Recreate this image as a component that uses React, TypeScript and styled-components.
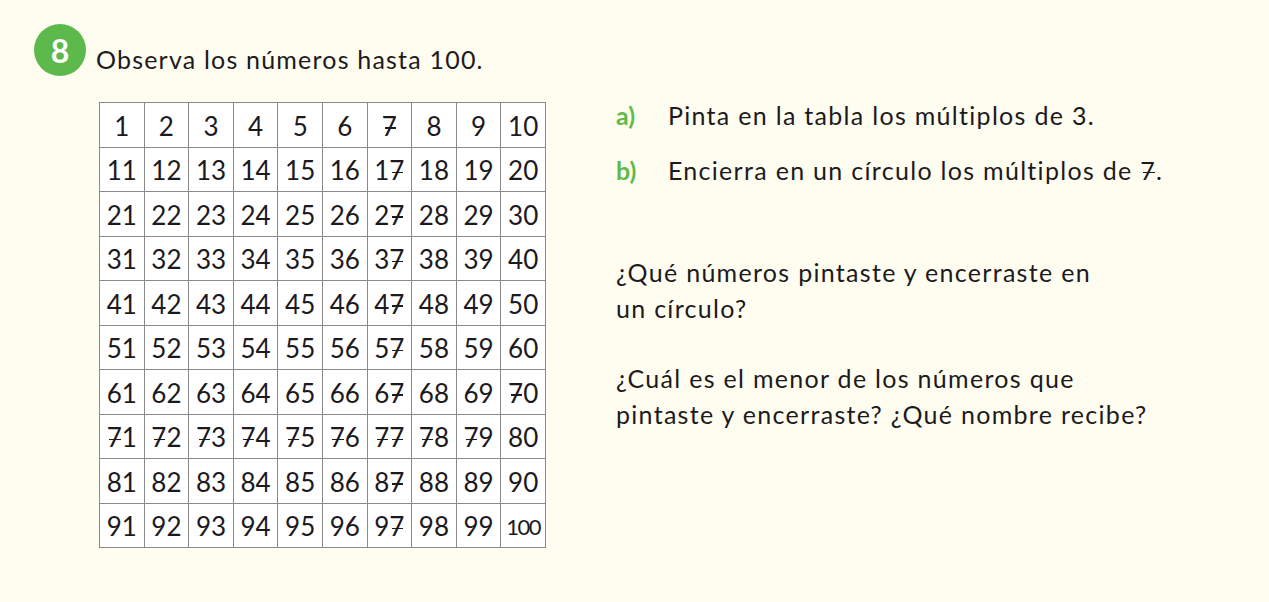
import React from "react";
import styled, { createGlobalStyle } from "styled-components";

const GlobalStyle = createGlobalStyle`
  html, body {
    margin: 0;
    padding: 0;
    background: #fffdf0;
  }
  body {
    font-family: "Lato", "Liberation Sans", sans-serif;
    color: #1c1a1e;
  }
`;

const Page = styled.div`
  width: 1269px;
  height: 602px;
  padding: 24px 0 0 34px;
  box-sizing: border-box;
`;

const Header = styled.div`
  display: flex;
  align-items: center;
  gap: 10px;
`;

const Badge = styled.div`
  width: 52px;
  height: 52px;
  border-radius: 50%;
  background: #5db94b;
  color: #fff;
  font-weight: 700;
  font-size: 32px;
  display: flex;
  align-items: center;
  justify-content: center;
`;

const Title = styled.h2`
  margin: 18px 0 0;
  font-size: 25px;
  font-weight: 400;
  letter-spacing: 1.2px;
`;

const Body = styled.div`
  display: flex;
  align-items: flex-start;
  margin-top: 26px;
`;

const Table = styled.div`
  margin-left: 65px;
  display: grid;
  grid-template-columns: repeat(10, 44.6px);
  grid-auto-rows: 44.5px;
  border-left: 1px solid #8a8a8a;
  border-top: 1px solid #8a8a8a;
  background: #fff;
`;

const Cell = styled.div<{ $small?: boolean }>`
  border-right: 1px solid #8a8a8a;
  border-bottom: 1px solid #8a8a8a;
  display: flex;
  align-items: center;
  justify-content: center;
  font-size: ${(p) => (p.$small ? "22px" : "26px")};
  letter-spacing: ${(p) => (p.$small ? "-1.5px" : "0")};
  padding-top: 2px;
`;

const Seven = styled.span`
  position: relative;
  display: inline-block;

  &::after {
    content: "";
    position: absolute;
    left: 18%;
    right: 8%;
    top: 55%;
    height: 1.5px;
    background: currentColor;
  }
`;

const Side = styled.div`
  margin-left: 70px;
  margin-top: -5px;
  display: flex;
  flex-direction: column;
  font-size: 25px;
  line-height: 36px;
  letter-spacing: 1.3px;
`;

const Item = styled.div`
  display: flex;
  gap: 28px;
  margin-bottom: 19px;
`;

const ItemLabel = styled.span`
  color: #62ba48;
  font-weight: 700;
  width: 24px;
  letter-spacing: 0;
`;

const Question = styled.p`
  margin: 0;
  width: 600px;

  & + & {
    margin-top: 34px;
  }
`;

const QuestionGroup = styled.div`
  margin-top: 47px;
`;

function withSevens(text: string) {
  return text.split("").map((ch, i) =>
    ch === "7" ? <Seven key={i}>7</Seven> : <React.Fragment key={i}>{ch}</React.Fragment>
  );
}

export default function App() {
  const numbers = Array.from({ length: 100 }, (_, i) => i + 1);

  return (
    <>
      <GlobalStyle />
      <Page>
        <Header>
          <Badge>8</Badge>
          <Title>Observa los números hasta 100.</Title>
        </Header>
        <Body>
          <Table>
            {numbers.map((n) => (
              <Cell key={n} $small={n === 100}>
                {withSevens(String(n))}
              </Cell>
            ))}
          </Table>
          <Side>
            <Item>
              <ItemLabel>a)</ItemLabel>
              <span>Pinta en la tabla los múltiplos de 3.</span>
            </Item>
            <Item>
              <ItemLabel>b)</ItemLabel>
              <span>Encierra en un círculo los múltiplos de {withSevens("7")}.</span>
            </Item>
            <QuestionGroup>
              <Question>
                ¿Qué números pintaste y encerraste en
                <br />
                un círculo?
              </Question>
              <Question>
                ¿Cuál es el menor de los números que
                <br />
                pintaste y encerraste? ¿Qué nombre recibe?
              </Question>
            </QuestionGroup>
          </Side>
        </Body>
      </Page>
    </>
  );
}
